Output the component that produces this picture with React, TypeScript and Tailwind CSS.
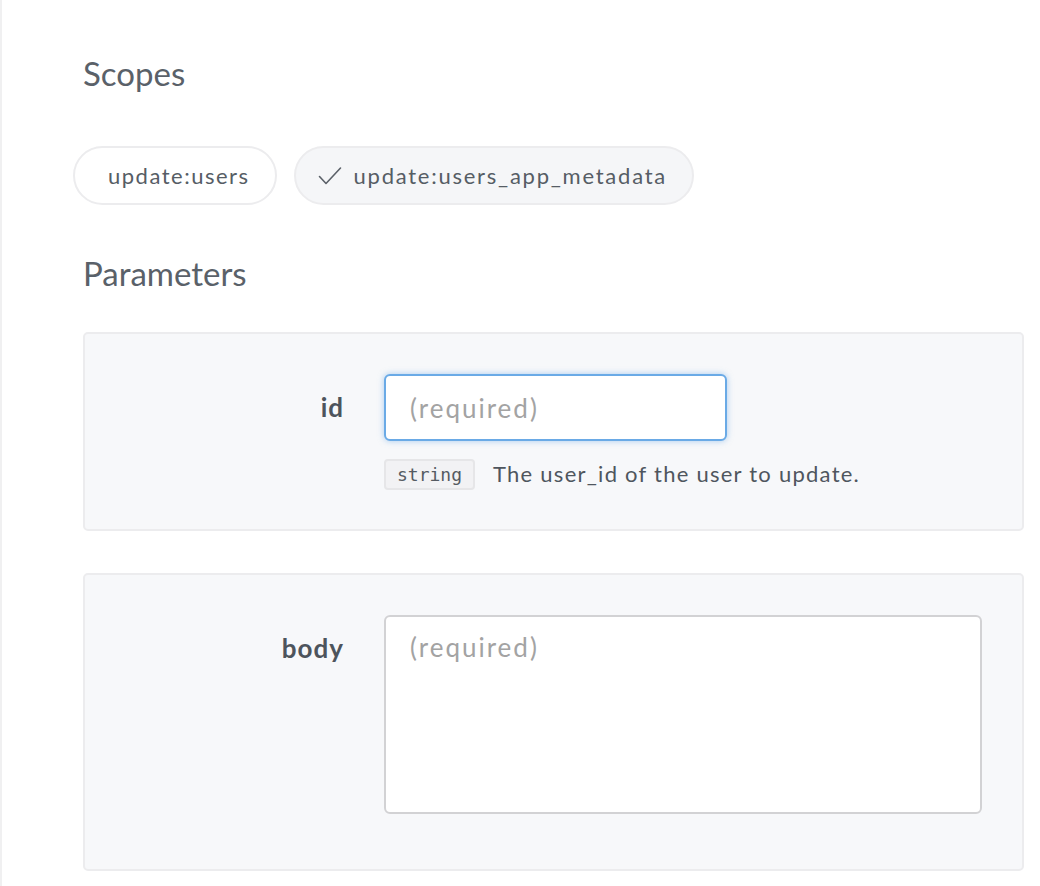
import React from "react";

const FONT = { fontFamily: "Lato, 'Noto Sans', sans-serif" };

function Check() {
  return (
    <svg width="24" height="22" viewBox="0 0 24 22" fill="none" className="shrink-0">
      <path d="M1.5 11.5 L8 18.5 L22.5 3" stroke="#5b6169" strokeWidth="1.6" strokeLinecap="round" strokeLinejoin="round" />
    </svg>
  );
}

function Heading({ children }: { children: React.ReactNode }) {
  return <h2 className="ml-[10px] text-[33px] leading-[40px] text-[#5a6169]">{children}</h2>;
}

export default function App() {
  return (
    <div className="min-h-[886px] bg-white border-l-2 border-[#f0f0f1] pl-[71px] pr-[16px] pt-[53px]" style={FONT}>
      {/* ── Scopes ── */}
      <Heading>Scopes</Heading>
      <div className="mt-[53px] flex gap-[17px]">
        <button className="h-[59px] rounded-full border-2 border-[#ececee] bg-white pl-[33px] pr-[25px] text-[22px] tracking-[1.5px] text-[#565d65]">
          update:users
        </button>
        <button className="flex h-[59px] items-center gap-[12px] rounded-full border-2 border-[#ececee] bg-[#f5f6f8] pl-[22px] pr-[25px] text-[22px] tracking-[1.75px] text-[#565d65]">
          <Check />
          update:users_app_metadata
        </button>
      </div>

      {/* ── Parameters ── */}
      <div className="mt-[48px]">
        <Heading>Parameters</Heading>
      </div>

      <div className="ml-[10px] mt-[39px] flex flex-col gap-[42px]">
        <div className="flex rounded-[5px] border-2 border-[#ececee] bg-[#f7f8fa] pt-[40px] pb-[39px]">
          <div className="flex h-[67px] w-[259px] shrink-0 items-center justify-end text-[26px] font-bold tracking-[1px] text-[#4d545c]">
            id
          </div>
          <div className="ml-[40px]">
            <input
              placeholder="(required)"
              className="h-[67px] w-[343px] rounded-[6px] border-2 border-[#6aaae6] bg-white px-[24px] text-[26px] tracking-[2px] text-[#444] placeholder:text-[#a3a3a3] shadow-[0_0_6px_rgba(100,165,230,0.55)] outline-none"
              style={FONT}
            />
            <div className="mt-[18px] flex items-center gap-[18px]">
              <code
                className="flex h-[31px] items-center rounded-[4px] border-2 border-[#e6e6e8] bg-[#f2f2f4] px-[11px] text-[18px] text-[#555b62]"
                style={{ fontFamily: "'DejaVu Sans Mono', monospace" }}
              >
                string
              </code>
              <span className="-mt-[3px] text-[22px] tracking-[1.25px] text-[#4f565e]">The user_id of the user to update.</span>
            </div>
          </div>
        </div>

        <div className="flex rounded-[5px] border-2 border-[#ececee] bg-[#f7f8fa] pt-[40px] pb-[55px] pr-[40px]">
          <div className="flex h-[67px] w-[259px] shrink-0 items-center justify-end text-[26px] font-bold tracking-[1px] text-[#4d545c]">
            body
          </div>
          <textarea
            placeholder="(required)"
            className="ml-[40px] h-[199px] flex-1 resize-none rounded-[6px] border-2 border-[#d2d2d4] bg-white px-[24px] pt-[11px] text-[26px] tracking-[2px] text-[#444] placeholder:text-[#a3a3a3] outline-none"
            style={FONT}
          />
        </div>
      </div>
    </div>
  );
}
